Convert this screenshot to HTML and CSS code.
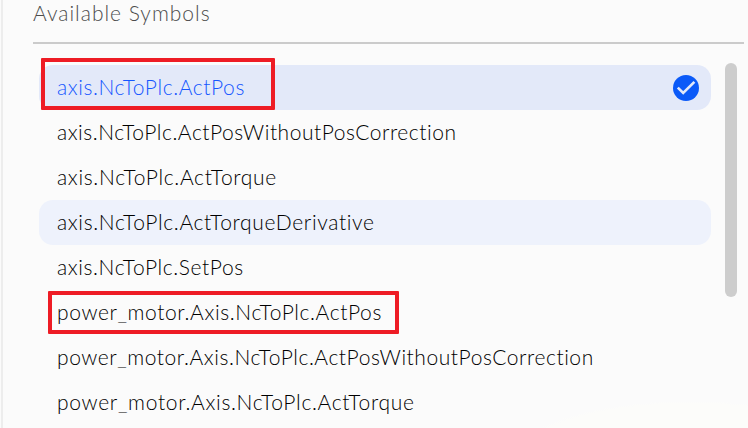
FILE: index.html
```html
<!DOCTYPE html>
<html lang="en">
<head>
<meta charset="utf-8">
<title>Available Symbols</title>
<link rel="stylesheet" href="styles.css">
</head>
<body>
<main class="panel">
  <h1 class="title"><span>Available Symbols</span></h1>
  <div class="content">
    <ul class="list">
      <li class="row selected"><span class="s1">axis.NcToPlc.ActPos</span>
        <svg class="check" viewBox="0 0 26 26"><circle cx="13" cy="13" r="13"/><path d="M4.8 12.6l5.4 5.4L21.4 6.8"/></svg>
        <i class="mark mark-first"></i>
      </li>
      <li class="row"><span class="s2">axis.NcToPlc.ActPosWithoutPosCorrection</span></li>
      <li class="row"><span class="s3">axis.NcToPlc.ActTorque</span></li>
      <li class="row hover"><span class="s4">axis.NcToPlc.ActTorqueDerivative</span></li>
      <li class="row"><span class="s5">axis.NcToPlc.SetPos</span></li>
      <li class="row"><span class="s6">power_motor.Axis.NcToPlc.ActPos</span><i class="mark mark-second"></i></li>
      <li class="row"><span class="s7">power_motor.Axis.NcToPlc.ActPosWithoutPosCorrection</span></li>
      <li class="row"><span class="s8">power_motor.Axis.NcToPlc.ActTorque</span></li>
    </ul>
    <div class="scrollbar"></div>
  </div>
</main>
</body>
</html>
```
FILE: styles.css
```css
* { box-sizing: border-box; }
body {
  margin: 0;
  height: 428px;
  overflow: hidden;
  background: radial-gradient(ellipse 180px 60px at 690px 461px, #fcfcfa 96%, #fbfbfb 100%);
  font-family: Lato, "Open Sans", sans-serif;
  font-weight: 300;
  font-size: 21px;
  color: #000;
}
.panel {
  height: 428px;
  margin-left: 1px;
  border-left: 2px solid #ededed;
  padding-left: 30px;
}
.title {
  margin: 0;
  height: 44px;
  padding-top: 1px;
  border-bottom: 2px solid #cbcbcb;
  font-size: 21px;
  font-weight: 300;
  line-height: 24px;
  color: #4c4c4c;
  letter-spacing: 0.99px;
  margin-right: 4px;
}
.content { display: flex; padding: 20px 11px 0 6px; gap: 14px; }
.list { margin: 0; padding: 1px 0 0; list-style: none; width: 672px; }
.row {
  position: relative;
  display: flex;
  align-items: center;
  justify-content: space-between;
  height: 45px;
  padding: 0 12px 0 18px;
  border-radius: 14px;
  white-space: nowrap;
}
.row span { padding-bottom: 2px; }
.selected { background: #e3e9f9; color: #1557ff; }
.hover { background: #eef2fc; }
.check { width: 26px; height: 26px; fill: #0b5af8; }
.check path { fill: none; stroke: #e3e9f9; stroke-width: 2.6; }
.scrollbar { width: 12px; height: 234px; margin-top: -1px; border-radius: 6px; background: #cdcdcd; }
.mark { position: absolute; border: 4px solid #ee1c25; border-radius: 1px; }
.mark-first { left: 2px; top: -7px; width: 234px; height: 52px; }
.mark-second { left: 9px; top: 1px; width: 351px; height: 43px; }
.s1 { letter-spacing: 0.59px; }
.s2 { letter-spacing: 0.53px; }
.s3 { letter-spacing: 0.69px; }
.s4 { letter-spacing: 0.65px; }
.s5 { letter-spacing: 0.6px; }
.s6 { letter-spacing: 0.61px; }
.s7 { letter-spacing: 0.56px; }
.s8 { letter-spacing: 0.69px; }
```
